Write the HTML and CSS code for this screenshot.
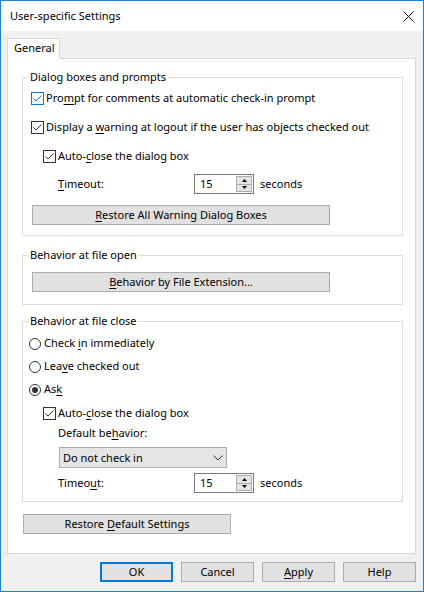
FILE: index.html
```html
<!DOCTYPE html>
<html>
<head>
<meta charset="utf-8">
<title>User-specific Settings</title>
<link rel="stylesheet" href="styles.css">
</head>
<body>
<div class="window">
  <div class="titlebar">
    <span class="title">User-specific Settings</span>
    <svg class="close" width="11" height="11" viewBox="0 0 11 11"><path d="M0.5 0.5 L10.5 10.5 M10.5 0.5 L0.5 10.5" stroke="#111" stroke-width="1" fill="none"/></svg>
  </div>
  <div class="client">
    <div class="tabstrip">
      <div class="tab">General</div>
      <div class="tabfill"></div>
    </div>
    <div class="panel">
      <fieldset class="group">
        <legend>Dialog boxes and prompts</legend>
        <div class="gbody gbody-dialogs">
          <div class="check check-focus">
            <svg class="cbox" width="13" height="13" viewBox="0 0 13 13"><rect x="0.5" y="0.5" width="12" height="12" fill="#fff" stroke="#0078d7"/><polyline points="2.5,6.5 5,9 10.5,3.5" fill="none" stroke="#0078d7" stroke-width="1"/></svg>
            <span>Pro<u>m</u>pt for comments at automatic check-in prompt</span>
          </div>
          <div class="check gap13">
            <svg class="cbox" width="13" height="13" viewBox="0 0 13 13"><rect x="0.5" y="0.5" width="12" height="12" fill="#fff" stroke="#333"/><polyline points="2.5,6.5 5,9 10.5,3.5" fill="none" stroke="#333" stroke-width="1"/></svg>
            <span>Display a <u>w</u>arning at logout if the user has objects checked out</span>
          </div>
          <div class="check gap13 indent">
            <svg class="cbox" width="13" height="13" viewBox="0 0 13 13"><rect x="0.5" y="0.5" width="12" height="12" fill="#fff" stroke="#333"/><polyline points="2.5,6.5 5,9 10.5,3.5" fill="none" stroke="#333" stroke-width="1"/></svg>
            <span>Auto-<u>c</u>lose the dialog box</span>
          </div>
          <div class="field-row gap10">
            <span class="field-label"><u>T</u>imeout:</span>
            <div class="spin">
              <span class="spin-val">15</span>
              <div class="spin-btns">
                <div class="spin-btn"><svg width="5" height="3" viewBox="0 0 5 3"><polygon points="2.5,0 5,3 0,3" fill="#000"/></svg></div>
                <div class="spin-btn"><svg width="5" height="3" viewBox="0 0 5 3"><polygon points="0,0 5,0 2.5,3" fill="#000"/></svg></div>
              </div>
            </div>
            <span class="unit">seconds</span>
          </div>
          <button class="btn btn-wide gap11"><u>R</u>estore All Warning Dialog Boxes</button>
        </div>
      </fieldset>

      <fieldset class="group group-open">
        <legend>Behavior at file open</legend>
        <div class="gbody gbody-open">
          <button class="btn btn-wide"><u>B</u>ehavior by File Extension...</button>
        </div>
      </fieldset>

      <fieldset class="group group-close">
        <legend>Behavior at file close</legend>
        <div class="gbody gbody-close">
          <div class="radio">
            <svg class="rbox" width="12" height="12" viewBox="0 0 12 12"><circle cx="6" cy="6" r="5.5" fill="#fff" stroke="#333"/></svg>
            <span>Check <u>i</u>n immediately</span>
          </div>
          <div class="radio gap7">
            <svg class="rbox" width="12" height="12" viewBox="0 0 12 12"><circle cx="6" cy="6" r="5.5" fill="#fff" stroke="#333"/></svg>
            <span>Lea<u>v</u>e checked out</span>
          </div>
          <div class="radio gap7">
            <svg class="rbox" width="12" height="12" viewBox="0 0 12 12"><circle cx="6" cy="6" r="5.5" fill="#fff" stroke="#333"/><circle cx="6" cy="6" r="3" fill="#333"/></svg>
            <span>As<u>k</u></span>
          </div>
          <div class="check gap8 indent">
            <svg class="cbox" width="13" height="13" viewBox="0 0 13 13"><rect x="0.5" y="0.5" width="12" height="12" fill="#fff" stroke="#333"/><polyline points="2.5,6.5 5,9 10.5,3.5" fill="none" stroke="#333" stroke-width="1"/></svg>
            <span>Auto-<u>c</u>lose the dialog box</span>
          </div>
          <div class="sublabel">Default be<u>h</u>avior:</div>
          <div class="select">
            <span>Do not check in</span>
            <svg width="10" height="6" viewBox="0 0 10 6"><polyline points="0.5,0.5 5,5 9.5,0.5" fill="none" stroke="#333" stroke-width="1"/></svg>
          </div>
          <div class="field-row gap5">
            <span class="field-label">Timeo<u>u</u>t:</span>
            <div class="spin">
              <span class="spin-val">15</span>
              <div class="spin-btns">
                <div class="spin-btn"><svg width="5" height="3" viewBox="0 0 5 3"><polygon points="2.5,0 5,3 0,3" fill="#000"/></svg></div>
                <div class="spin-btn"><svg width="5" height="3" viewBox="0 0 5 3"><polygon points="0,0 5,0 2.5,3" fill="#000"/></svg></div>
              </div>
            </div>
            <span class="unit">seconds</span>
          </div>
        </div>
      </fieldset>

      <button class="btn btn-restore">Restore <u>D</u>efault Settings</button>
    </div>
    <div class="footer">
      <button class="btn btn-foot btn-default">OK</button>
      <button class="btn btn-foot">Cancel</button>
      <button class="btn btn-foot"><u>A</u>pply</button>
      <button class="btn btn-foot">Help</button>
    </div>
  </div>
</div>
</body>
</html>
```

FILE: styles.css
```css
* { box-sizing: border-box; }
html, body { margin: 0; padding: 0; }
body {
  background: #f0f0f0;
  font-family: "Noto Sans", "Open Sans", sans-serif;
  font-size: 11px;
  line-height: 16px;
  color: #000;
}
u { text-decoration-thickness: 1px; text-underline-offset: 2px; }

.window {
  width: 424px;
  height: 592px;
  border: 1px solid #1a80d5;
  background: #f0f0f0;
  display: flex;
  flex-direction: column;
}
.titlebar {
  flex: none;
  height: 30px;
  background: #fff;
  display: flex;
  align-items: center;
  justify-content: space-between;
  padding: 0 9px 0 9px;
}
.close { display: block; }

.client {
  flex: 1;
  display: flex;
  flex-direction: column;
  padding: 7px 7px 0 6px;
}
.tabstrip { display: flex; height: 21px; }
.tab {
  width: 53px;
  height: 21px;
  background: #fff;
  border: 1px solid #d9d9d9;
  border-bottom: none;
  padding: 1px 0 0 6px;
}
.tabfill { flex: 1; border-bottom: 1px solid #d9d9d9; }

.panel {
  background: #fff;
  border: 1px solid #d9d9d9;
  border-top: none;
  padding: 11px 0 19px 14px;
}

.group {
  margin: 0;
  padding: 0;
  width: 381px;
  min-width: 0;
  border: 1px solid #dcdcdc;
}
.group legend {
  padding: 0 2px;
  margin-left: 5px;
  line-height: 14px;
}
.group-open { margin-top: 12px; }
.group-close { margin-top: 9px; }

.gbody { display: flex; flex-direction: column; align-items: flex-start; padding-left: 8px; }
.gbody-dialogs { padding-top: 6px; padding-bottom: 10px; }
.gbody-open { padding-top: 10px; padding-bottom: 12px; }
.gbody-close { padding-top: 7px; padding-bottom: 8px; }

.check, .radio { display: flex; align-items: flex-start; height: 16px; white-space: nowrap; }
.cbox { flex: none; margin: 2px 2px 0 0; }
.rbox { flex: none; margin: 3px 3px 0 -2px; }

.field-row { display: flex; align-items: center; height: 20px; margin-left: 27px; }
.field-label { width: 136px; }
.spin {
  display: flex;
  width: 60px;
  height: 20px;
  background: #fff;
  border: 1px solid #7a7a7a;
}
.spin-val { flex: 1; padding-left: 5px; line-height: 18px; }
.spin-btns { width: 17px; display: flex; flex-direction: column; padding: 1px 1px 1px 0; }
.spin-btn {
  flex: 1;
  background: #e5e5e5;
  border: 1px solid #adadad;
  display: flex;
  align-items: center;
  justify-content: center;
}
.spin-btn + .spin-btn { border-top: none; }
.spin-btn svg { display: block; }
.unit { margin-left: 6px; }

.sublabel { margin: 4px 0 0 27px; }
.select {
  margin: 6px 0 0 28px;
  width: 168px;
  height: 21px;
  background: #e5e5e5;
  border: 1px solid #acacac;
  display: flex;
  align-items: center;
  justify-content: space-between;
  padding: 0 3px 0 3px;
}
.select svg { display: block; }

.btn {
  display: block;
  height: 20px;
  padding: 0;
  background: #e1e1e1;
  border: 1px solid #adadad;
  border-radius: 0;
  font: inherit;
  line-height: 16px;
  color: #000;
  text-align: center;
}
.btn-wide { width: 298px; margin-left: 1px; }
.btn-restore { width: 208px; margin: 12px 0 0 1px; }

.footer {
  display: flex;
  justify-content: flex-end;
  gap: 8px;
  margin-top: 8px;
}
.btn-foot { width: 73px; margin: 0; }
.btn-default { border: 2px solid #0078d7; }

/* spacing modifiers */
.indent { margin-left: 12px; }
.gap5 { margin-top: 5px; }
.gap7 { margin-top: 7px; }
.gap8 { margin-top: 8px; }
.gap10 { margin-top: 10px; }
.gap11 { margin-top: 11px; }
.gap13 { margin-top: 13px; }
```
